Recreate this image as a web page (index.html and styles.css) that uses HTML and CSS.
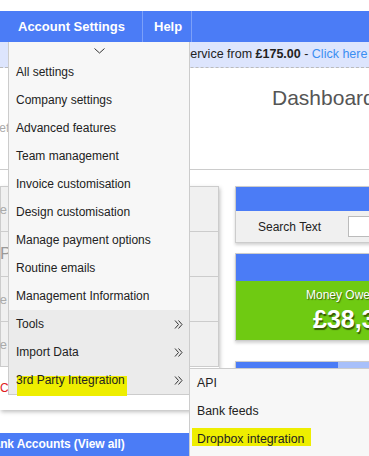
FILE: index.html
```html
<!DOCTYPE html>
<html>
<head>
    <meta charset="UTF-8">
    <title>Dashboard</title>
    <link rel="stylesheet" href="styles.css">
</head>
<body>
    <div class="topgap"></div>
    <nav class="topnav">
        <a class="navitem navitem-first">Account Settings</a>
        <a class="navitem navitem-help">Help</a>
    </nav>
    <div class="notice">service from <b>£175.00</b> - <a class="notice-link">Click here to find out more</a></div>

    <div class="page">
        <h1 class="title">Dashboard</h1>
        <div class="hint"><span class="clip-left"><span>Type</span></span> to search</div>

        <div class="main">
            <div class="leftcol">
                <div class="sidepanel">
                    <div class="siderows">
                        <div class="siderow"><span class="clip-left"><span>Create invoice</span></span></div>
                        <div class="siderow siderow-big">P</div>
                        <div class="siderow"><span class="clip-left"><span>Create quote</span></span></div>
                        <div class="siderow"><span class="clip-left"><span>Create estimate</span></span></div>
                    </div>
                    <div class="sidewarn">Click here to complete your setup (3 steps left)</div>
                </div>
            </div>
            <div class="rightcol">
                <div class="card">
                    <div class="card-head"></div>
                    <div class="card-body search-body">
                        <label class="search-label">Search Text</label>
                        <input class="search-input" type="text">
                    </div>
                </div>
                <div class="card">
                    <div class="card-head card-head-tall"></div>
                    <div class="card-body money-body">
                        <div class="money-label">Money Owed To You</div>
                        <div class="money-value">£38,356.40</div>
                    </div>
                </div>
                <div class="card card-last">
                    <div class="progress"><div class="progress-fill"></div></div>
                </div>
            </div>
        </div>

        <div class="bankbar"><span class="bankbar-text">Bank Accounts (View all)</span></div>
    </div>

    <!-- open dropdown -->
    <div class="dropdown">
        <div class="dropdown-top">
            <svg width="11" height="6" viewBox="0 0 11 6"><polyline points="0.5,0.5 5.5,5 10.5,0.5" fill="none" stroke="#333" stroke-width="1"/></svg>
        </div>
        <div class="dd-item">All settings</div>
        <div class="dd-item">Company settings</div>
        <div class="dd-item">Advanced features</div>
        <div class="dd-item">Team management</div>
        <div class="dd-item">Invoice customisation</div>
        <div class="dd-item">Design customisation</div>
        <div class="dd-item">Manage payment options</div>
        <div class="dd-item">Routine emails</div>
        <div class="dd-item">Management Information</div>
        <div class="dd-item dd-sub">Tools
            <svg class="dd-arrow" width="9" height="9" viewBox="0 0 9 9"><path d="M1 0.5 L4.5 4.5 L1 8.5 M4.5 0.5 L8 4.5 L4.5 8.5" fill="none" stroke="#333" stroke-width="1"/></svg>
        </div>
        <div class="dd-item dd-sub">Import Data
            <svg class="dd-arrow" width="9" height="9" viewBox="0 0 9 9"><path d="M1 0.5 L4.5 4.5 L1 8.5 M4.5 0.5 L8 4.5 L4.5 8.5" fill="none" stroke="#333" stroke-width="1"/></svg>
        </div>
        <div class="dd-item dd-sub"><span class="hl hl-third">3rd Party Integration</span>
            <svg class="dd-arrow" width="9" height="9" viewBox="0 0 9 9"><path d="M1 0.5 L4.5 4.5 L1 8.5 M4.5 0.5 L8 4.5 L4.5 8.5" fill="none" stroke="#333" stroke-width="1"/></svg>
        </div>
    </div>

    <div class="submenu">
        <div class="dd-item">API</div>
        <div class="dd-item">Bank feeds</div>
        <div class="dd-item"><span class="hl hl-dropbox">Dropbox integration</span></div>
    </div>
</body>
</html>
```

FILE: styles.css
```css
html, body {
    overflow: hidden;
}

body {
    margin: 0;
    padding: 0;
    background-color: #FFFFFF;
    font-family: "Liberation Sans", Arial, sans-serif;
    font-size: 12px;
    color: #222222;
    position: relative;
    height: 456px;
}

.topgap {
    height: 11px;
}

.topnav {
    display: flex;
    height: 31px;
    padding-left: 8px;
    background-color: #4B7CF6;
}

.navitem {
    display: block;
    box-sizing: border-box;
    height: 31px;
    line-height: 31px;
    color: #FFFFFF;
    font-weight: bold;
    font-size: 13px;
    border-right: 1px solid #7CA0F9;
    white-space: nowrap;
}

.navitem-first {
    width: 135px;
    padding-left: 10px;
}

.navitem-help {
    width: 49px;
    padding-left: 11px;
}

.notice {
    height: 25px;
    line-height: 25px;
    padding-left: 184px;
    background-color: #DDE5FD;
    border-bottom: 1px dashed #BBBBBB;
    white-space: nowrap;
    overflow: hidden;
    color: #222222;
    font-size: 12.5px;
}

.notice-link {
    color: #3A8EF2;
}

.title {
    margin: 18px 0 0 0;
    padding-left: 272px;
    font-size: 21px;
    line-height: 24px;
    font-weight: normal;
    color: #555555;
    white-space: nowrap;
}

.hint {
    display: flex;
    margin-top: 11px;
    line-height: 15px;
    color: #AAAAAA;
    white-space: nowrap;
    padding-bottom: 33px;
    border-bottom: 1px solid #CCCCCC;
}

/* text that runs off the left edge, its end stays visible */
.clip-left {
    display: flex;
    justify-content: flex-end;
    width: 6px;
    white-space: nowrap;
}

.main {
    display: flex;
    gap: 16px;
    margin-top: 16px;
}

.leftcol {
    flex: 0 0 219px;
    min-width: 0;
}

.sidepanel {
    background-color: #FFFFFF;
    box-shadow: 1px 2px 4px rgba(0, 0, 0, 0.25);
}

.siderows {
    background-color: #F0F0F0;
    border: 1px solid #CCCCCC;
    border-bottom: none;
}

.siderow {
    display: flex;
    align-items: center;
    height: 44px;
    border-bottom: 1px solid #CCCCCC;
    color: #AAAAAA;
    font-size: 13px;
}

.siderow-big {
    font-size: 17px;
    color: #999999;
    margin-left: -1px;
}

.sidewarn {
    height: 43px;
    line-height: 43px;
    color: #E02020;
    white-space: nowrap;
    overflow: hidden;
}

.rightcol {
    flex: 0 0 300px;
    min-width: 0;
}

.card {
    border: 1px solid #CCCCCC;
    box-shadow: 0 2px 3px rgba(0, 0, 0, 0.18);
    margin-bottom: 10px;
}

.card-last {
    margin-top: 20px;
}

.card-head {
    height: 24px;
    background-color: #4B7CF6;
}

.card-head-tall {
    height: 27px;
}

.card-body {
    background-color: #F0F0F0;
}

.search-body {
    display: grid;
    grid-template-columns: 90px 1fr;
    align-items: center;
    height: 31px;
    padding-left: 22px;
}

.search-label {
    font-size: 12px;
    color: #222222;
}

.search-input {
    box-sizing: border-box;
    height: 21px;
    width: 150px;
    border: 1px solid #BBBBBB;
    background-color: #FFFFFF;
    padding: 0;
}

.money-body {
    background-color: #6FCA12;
    color: #FFFFFF;
    height: 59px;
    box-sizing: border-box;
    padding-top: 7px;
    text-shadow: 1px 1px 1px rgba(40, 60, 0, 0.7);
    white-space: nowrap;
}

.money-label {
    padding-left: 70px;
    font-size: 12px;
    line-height: 15px;
    margin-bottom: 2px;
}

.money-value {
    padding-left: 77px;
    font-size: 25px;
    line-height: 28px;
    font-weight: bold;
    text-shadow: 1px 2px 1px rgba(40, 60, 0, 0.8);
}

.progress {
    height: 24px;
    background-color: #A8C0FA;
}

.progress-fill {
    width: 102px;
    height: 100%;
    background-color: #4B7CF6;
}

.bankbar {
    margin-top: 23px;
    height: 30px;
    background-color: #4B7CF6;
    line-height: 23px;
    white-space: nowrap;
    overflow: hidden;
}

.bankbar-text {
    display: inline-block;
    margin-left: -15px;
    color: #FFFFFF;
    font-weight: bold;
    font-size: 12px;
    letter-spacing: -0.1px;
}

/* dropdown menu opened from the nav */
.dropdown {
    position: absolute;
    left: 8px;
    top: 42px;
    width: 180px;
    background-color: #F7F7F7;
    border: 1px solid #CCCCCC;
    border-top: none;
}

.dropdown-top {
    display: flex;
    justify-content: center;
    height: 16px;
    padding-top: 6px;
    box-sizing: border-box;
}

.dropdown-top svg {
    display: block;
}

.dd-item {
    display: flex;
    align-items: center;
    height: 28px;
    padding-left: 7px;
    color: #222222;
    font-size: 12px;
    white-space: nowrap;
}

.dd-sub {
    background-color: #EBEBEB;
    padding-right: 6px;
}

.dd-arrow {
    margin-left: auto;
}

.submenu {
    position: absolute;
    left: 189px;
    top: 368px;
    width: 220px;
    height: 100px;
    background-color: #F7F7F7;
    border-top: 1px solid #CCCCCC;
    border-left: 1px solid #CCCCCC;
}

.submenu .dd-item {
    font-size: 12.3px;
}

/* marker pen highlight drawn over the screenshot */
.hl {
    position: relative;
    isolation: isolate;
}

.hl::before {
    content: "";
    position: absolute;
    z-index: -1;
    background-color: #EEEE00;
}

.hl-third::before {
    left: 1px;
    right: -2px;
    top: 3px;
    bottom: -9px;
}

.hl-dropbox::before {
    left: -5px;
    right: -7px;
    top: -4px;
    bottom: 0;
}
```
